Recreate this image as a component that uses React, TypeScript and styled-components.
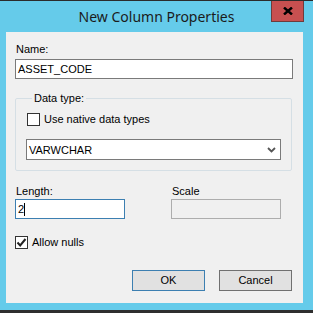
import React from 'react';
import styled, { createGlobalStyle } from 'styled-components';

const GlobalStyle = createGlobalStyle`
  html, body {
    margin: 0;
    padding: 0;
    background: #ffffff;
  }
  * {
    box-sizing: border-box;
  }
`;

const Window = styled.div`
  width: 313px;
  height: 313px;
  display: flex;
  flex-direction: column;
  background: #65cbea;
  border-top: 1px solid #2b2b2b;
  border-bottom: 3px solid #2f2f2f;
  font-family: 'Liberation Sans', Arial, sans-serif;
  font-size: 11px;
  color: #000000;
`;

const TitleBar = styled.div`
  height: 31px;
  display: grid;
  grid-template-columns: 1fr auto 1fr;
  align-items: start;
`;

const Title = styled.div`
  grid-column: 2;
  padding-top: 6px;
  font-family: 'Noto Sans', 'Open Sans', sans-serif;
  font-size: 14px;
  line-height: 20px;
  color: #1b1b1b;
`;

const CloseButton = styled.div`
  grid-column: 3;
  justify-self: end;
  margin-right: 9px;
  width: 33px;
  height: 21px;
  background: #c75050;
  border: 1px solid #6f3b3b;
  border-top: none;
  display: flex;
  align-items: center;
  justify-content: center;
`;

const Body = styled.div`
  display: flex;
  height: 271px;
  padding-left: 6px;
`;

const Client = styled.div`
  width: 297px;
  height: 271px;
  background: #f0f0f0;
  padding: 11px 10px 0 9px;
  display: flex;
  flex-direction: column;
`;

const Label = styled.div<{ $gap?: number }>`
  line-height: 13px;
  height: 13px;
  padding-left: 1px;
  margin-bottom: ${({ $gap }) => $gap ?? 3}px;
`;

const TextBox = styled.div<{ $width?: number; $focused?: boolean; $disabled?: boolean }>`
  width: ${({ $width }) => ($width ? `${$width}px` : '100%')};
  height: 20px;
  border: 1px solid
    ${({ $focused, $disabled }) => ($focused ? '#3c7fb1' : $disabled ? '#adadad' : '#7a7a7a')};
  background: ${({ $disabled }) => ($disabled ? '#f0f0f0' : '#ffffff')};
  padding-left: 2px;
  display: flex;
  align-items: center;
  line-height: 13px;
`;

const Caret = styled.span`
  display: inline-block;
  width: 1px;
  height: 13px;
  background: #000000;
`;

const GroupBox = styled.fieldset`
  margin: 13px 1px 0 0;
  padding: 0 0 10px 10px;
  border: 1px solid #d5dfe5;
  border-radius: 2px;
  min-width: 0;
`;

const Legend = styled.legend`
  margin-left: 6px;
  padding: 0 2px;
  line-height: 13px;
`;

const CheckRow = styled.label<{ $top: number; $indent?: number }>`
  display: flex;
  align-items: center;
  height: 13px;
  margin-top: ${({ $top }) => $top}px;
  margin-left: ${({ $indent }) => $indent ?? 0}px;
  gap: 4px;
  line-height: 13px;
`;

const Box = styled.span`
  width: 13px;
  height: 13px;
  border: 1px solid #333333;
  background: #ffffff;
  display: flex;
  align-items: center;
  justify-content: center;
`;

const Select = styled.div`
  margin-top: 13px;
  width: 255px;
  height: 21px;
  border: 1px solid #7a7a7a;
  background: #ffffff;
  display: flex;
  align-items: center;
  justify-content: space-between;
  padding: 0 4px 0 2px;
`;

const FieldRow = styled.div`
  display: flex;
  gap: 46px;
  margin-top: 14px;
`;

const Field = styled.div`
  display: flex;
  flex-direction: column;
`;

const ButtonRow = styled.div`
  display: flex;
  justify-content: flex-end;
  gap: 14px;
  margin-top: 21px;
  margin-right: 1px;
`;

const Button = styled.div<{ $default?: boolean }>`
  width: 73px;
  height: 21px;
  border: 1px solid ${({ $default }) => ($default ? '#3c7fb1' : '#707070')};
  background: #e1e1e1;
  display: flex;
  align-items: center;
  justify-content: center;
  line-height: 13px;
`;

export default function App() {
  return (
    <>
      <GlobalStyle />
      <Window>
        <TitleBar>
          <Title>New Column Properties</Title>
          <CloseButton>
            <svg width="10" height="8" viewBox="0 0 10 8">
              <path d="M1 0.5 L9 7.5 M9 0.5 L1 7.5" stroke="#000" strokeWidth="2.4" />
            </svg>
          </CloseButton>
        </TitleBar>
        <Body>
          <Client>
            <Label>Name:</Label>
            <TextBox>ASSET_CODE</TextBox>

            <GroupBox>
              <Legend>Data type:</Legend>
              <CheckRow $top={8} $indent={1}>
                <Box />
                Use native data types
              </CheckRow>
              <Select>
                <span>VARWCHAR</span>
                <svg width="9" height="6" viewBox="0 0 9 6">
                  <path d="M1 1 L4.5 4.5 L8 1" stroke="#555" strokeWidth="1.8" fill="none" />
                </svg>
              </Select>
            </GroupBox>

            <FieldRow>
              <Field>
                <Label $gap={1}>Length:</Label>
                <TextBox $width={110} $focused>
                  2<Caret />
                </TextBox>
              </Field>
              <Field>
                <Label $gap={1}>Scale</Label>
                <TextBox $width={110} $disabled />
              </Field>
            </FieldRow>

            <CheckRow $top={17}>
              <Box>
                <svg width="11" height="11" viewBox="0 0 11 11">
                  <path d="M1.5 5.5 L4.2 8.5 L9.5 2" stroke="#222" strokeWidth="2" fill="none" />
                </svg>
              </Box>
              Allow nulls
            </CheckRow>

            <ButtonRow>
              <Button $default>OK</Button>
              <Button>Cancel</Button>
            </ButtonRow>
          </Client>
        </Body>
      </Window>
    </>
  );
}
